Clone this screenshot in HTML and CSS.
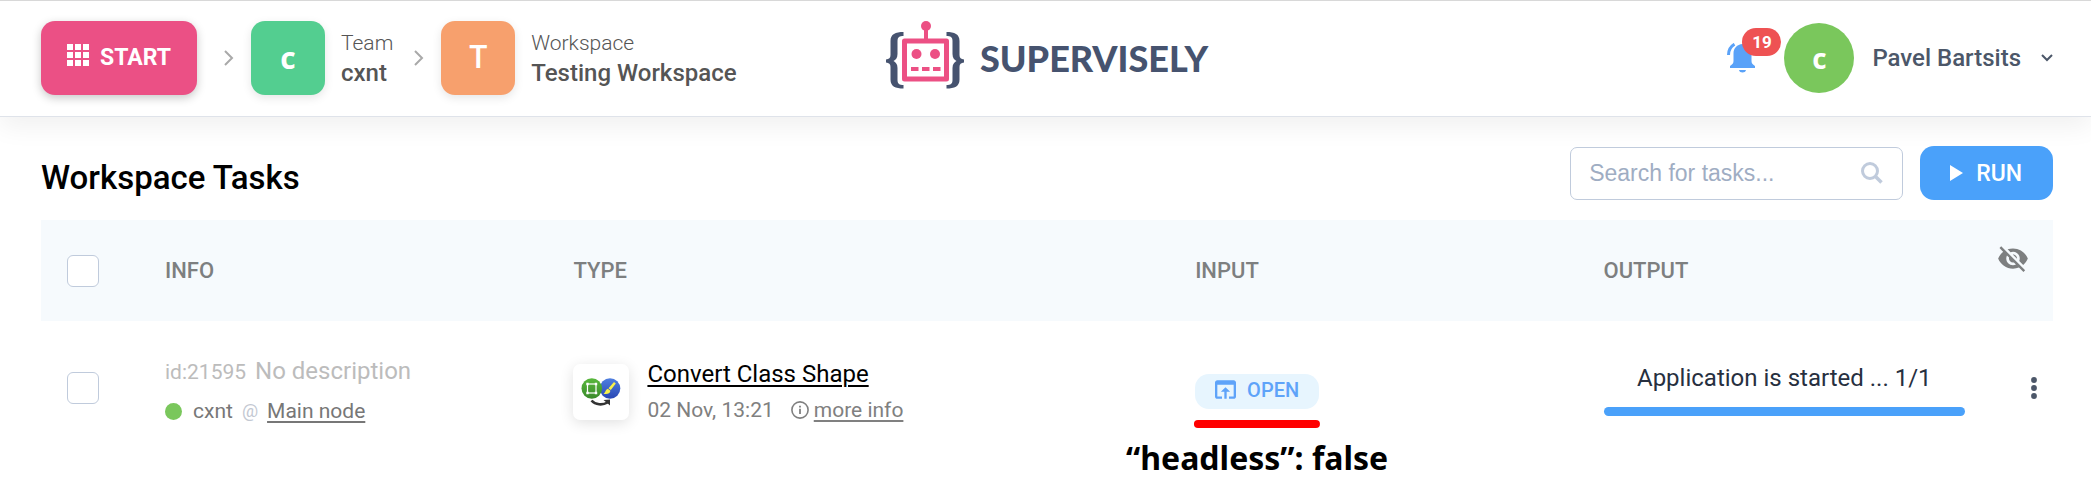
FILE: index.html
```html
<!DOCTYPE html>
<html lang="en">
<head>
<meta charset="utf-8">
<title>Workspace Tasks</title>
<link rel="stylesheet" href="styles.css">
</head>
<body>
<header class="topbar">
  <nav class="crumbs">
    <button class="start" type="button">
      <svg class="start-icon" viewBox="0 0 22 22" aria-hidden="true"><path fill="#fff" d="M0 0h6v6H0zM8 0h6v6H8zM16 0h6v6h-6zM0 8h6v6H0zM8 8h6v6H8zM16 8h6v6h-6zM0 16h6v6H0zM8 16h6v6H8zM16 16h6v6h-6z"/></svg>
      START
    </button>
    <svg class="crumb-arrow" viewBox="0 0 10 16" aria-hidden="true"><path d="M1 1l7 7-7 7" fill="none" stroke="#a9a9a9" stroke-width="2"/></svg>
    <a class="crumb" href="#team">
      <span class="tile tile-team">c</span>
      <span class="crumb-text"><span class="crumb-kind">Team</span><span class="crumb-name">cxnt</span></span>
    </a>
    <svg class="crumb-arrow" viewBox="0 0 10 16" aria-hidden="true"><path d="M1 1l7 7-7 7" fill="none" stroke="#a9a9a9" stroke-width="2"/></svg>
    <a class="crumb" href="#workspace">
      <span class="tile tile-workspace">T</span>
      <span class="crumb-text"><span class="crumb-kind">Workspace</span><span class="crumb-name">Testing Workspace</span></span>
    </a>
  </nav>
  <a class="logo" href="#home">
    <svg class="logo-mark" viewBox="0 0 78 68" aria-hidden="true">
      <path fill="#46536f" d="M17.500 11v4c-4 0-6 1-6 5v13c0 4-2 6-4 7 2 1 4 3 4 7v12c0 4 2 5 6 5v3.500c-8 0-13-2-13-9V46c0-3-1.500-4-4.500-4.500v-3C3 38 4.500 37 4.500 34V20c0-7 5-9 13-9z"/>
      <path fill="#46536f" d="M60.500 11v4c4 0 6 1 6 5v13c0 4 2 6 4 7-2 1-4 3-4 7v12c0 4-2 5-6 5v3.500c8 0 13-2 13-9V46c0-3 1.500-4 4.500-4.500v-3c-3-.5-4.500-1.500-4.500-4.500V20c0-7-5-9-13-9z"/>
      <rect x="18.500" y="20" width="42" height="38" fill="#fff" stroke="#ec5084" stroke-width="5" stroke-linejoin="round"/>
      <circle cx="40" cy="5" r="5" fill="#ec5084"/><path d="M40 5v15" stroke="#ec5084" stroke-width="4"/>
      <circle cx="30.500" cy="33" r="5" fill="#ec5084"/><circle cx="49" cy="33" r="5" fill="#ec5084"/>
      <path d="M25 48h7.500M36 48h7.500M47 48h7.500" stroke="#ec5084" stroke-width="4"/>
    </svg>
    <span class="logo-text">SUPERVISELY</span>
  </a>
  <div class="account">
    <button class="bell" type="button" aria-label="Notifications">
      <svg class="bell-icon" viewBox="0 0 28 30" aria-hidden="true">
        <path fill="#5aa2f8" d="M15.500 1c-5.500.5-9 4-9 9.500V18c0 2-1 3.500-3.500 5v2h25v-2c-2.500-1.500-3.500-3-3.500-5v-7.500c0-5.500-3.500-9-9-9.500zM12 27h7c-.5 1.800-1.800 2.500-3.500 2.500S12.500 28.800 12 27z"/>
        <path d="M1.500 12C1.500 7 3.500 3.500 7.500 1.200" fill="none" stroke="#5aa2f8" stroke-width="3"/>
      </svg>
      <span class="badge">19</span>
    </button>
    <button class="user" type="button">
      <span class="avatar">c</span>
      <span>Pavel Bartsits</span>
      <svg class="user-arrow" viewBox="0 0 12 8" aria-hidden="true"><path d="M1 1l5 5 5-5" fill="none" stroke="#4c5769" stroke-width="2"/></svg>
    </button>
  </div>
</header>

<main class="page">
  <div class="toolbar">
    <h1 class="title">Workspace Tasks</h1>
    <div class="search">
      <input class="search-input" type="text" placeholder="Search for tasks..." aria-label="Search for tasks">
      <svg class="search-icon" viewBox="0 0 22 22" aria-hidden="true"><circle cx="9" cy="9" r="7.500" fill="none" stroke="#c0cbdc" stroke-width="3"/><path d="M14.500 14.500l6 6" stroke="#c0cbdc" stroke-width="3.500"/></svg>
    </div>
    <button class="run" type="button">
      <svg class="run-icon" viewBox="0 0 13 16" aria-hidden="true"><path fill="#fff" d="M0 0l13 8-13 8z"/></svg>
      RUN
    </button>
  </div>

  <table class="tasks">
    <colgroup><col class="col-check"><col class="col-info"><col class="col-type"><col class="col-input"><col class="col-output"><col class="col-menu"></colgroup>
    <thead>
      <tr>
        <th class="cell-check"><input class="check" type="checkbox" aria-label="Select all tasks"></th>
        <th>INFO</th>
        <th>TYPE</th>
        <th>INPUT</th>
        <th>OUTPUT</th>
        <th class="cell-eye">
          <button class="icon-button" type="button" aria-label="Hide finished tasks">
            <svg class="eye-icon" viewBox="1 2 22 20" aria-hidden="true"><path fill="#7d7f80" d="M12 7c2.760 0 5 2.240 5 5 0 .65-.13 1.260-.36 1.830l2.920 2.920c1.510-1.260 2.700-2.890 3.430-4.750-1.730-4.390-6-7.500-11-7.500-1.400 0-2.740.25-3.980.7l2.160 2.160C10.740 7.130 11.350 7 12 7zM2 4.270l2.280 2.280.46.46C3.080 8.300 1.780 10.020 1 12c1.730 4.390 6 7.500 11 7.500 1.550 0 3.030-.3 4.380-.84l.42.42L19.730 22 21 20.730 3.270 3 2 4.270zM7.530 9.800l1.550 1.550c-.05.21-.08.43-.08.65 0 1.660 1.340 3 3 3 .22 0 .44-.03.65-.08l1.550 1.550c-.67.33-1.410.53-2.200.53-2.760 0-5-2.240-5-5 0-.79.2-1.530.53-2.200zm4.310-.78l3.150 3.150.02-.16c0-1.660-1.340-3-3-3l-.17.01z"/></svg>
          </button>
        </th>
      </tr>
    </thead>
    <tbody>
      <tr>
        <td class="cell-check"><input class="check" type="checkbox" aria-label="Select task 21595"></td>
        <td class="cell-info">
          <div class="info-line"><span class="task-id">id:21595</span><span class="task-note">No description</span></div>
          <div class="node-line"><span class="status"></span><span>cxnt</span><span class="at">@</span><a class="link" href="#node">Main node</a></div>
        </td>
        <td class="cell-type">
          <div class="app">
            <span class="app-card">
              <svg class="app-icon" viewBox="0 0 40 28" aria-hidden="true">
                <defs>
                  <linearGradient id="green" x1="0" y1="0" x2="0" y2="1"><stop offset="0" stop-color="#58b83c"/><stop offset="1" stop-color="#3b8a2b"/></linearGradient>
                  <linearGradient id="blue" x1="0" y1="0" x2="0" y2="1"><stop offset="0" stop-color="#5080e0"/><stop offset="1" stop-color="#2846b4"/></linearGradient>
                </defs>
                <circle cx="29" cy="10.500" r="10.300" fill="url(#blue)"/>
                <circle cx="10.800" cy="10.500" r="10.300" fill="url(#green)"/>
                <rect x="6.500" y="6" width="8.500" height="9" fill="none" stroke="#fff" stroke-width="1.200"/>
                <path fill="#fff" d="M5.300 4.800h2.400v2.400H5.300zM13.800 4.800h2.400v2.400h-2.400zM5.300 13.800h2.400v2.400H5.300zM13.800 13.800h2.400v2.400h-2.400z"/>
                <path fill="#f7f04a" d="M33 4l1.800 1.500-5 6.500-2.300-1.800zM26.800 10.800l2.600 2c-.4 3-3 3.500-6.900 3 2-1 1.800-4 4.300-5z"/>
                <path d="M10.500 22.500c4 4.500 11 5 16 2" fill="none" stroke="#333" stroke-width="2.600"/>
                <path fill="#333" d="M22.500 22l6.500-.5v6z"/>
              </svg>
            </span>
            <div>
              <a class="app-name" href="#app">Convert Class Shape</a>
              <div class="app-meta">
                <span>02 Nov, 13:21</span>
                <span class="more">
                  <svg class="more-icon" viewBox="0 0 18 18" aria-hidden="true"><circle cx="9" cy="9" r="8.100" fill="none" stroke="#808080" stroke-width="1.600"/><path d="M9 7.800V13M9 4.700v1.800" stroke="#808080" stroke-width="1.800"/></svg>
                  <a class="link" href="#more">more info</a>
                </span>
              </div>
            </div>
          </div>
        </td>
        <td>
          <div class="open-wrap">
            <button class="open" type="button">
              <svg class="open-icon" viewBox="3 4 18 16" aria-hidden="true"><path fill="#5ea3f9" d="M19 4H5c-1.110 0-2 .9-2 2v12c0 1.100.89 2 2 2h4v-2H5V8h14v10h-4v2h4c1.100 0 2-.9 2-2V6c0-1.100-.89-2-2-2zm-7 6l-4 4h3v6h2v-6h3l-4-4z"/></svg>
              OPEN
            </button>
            <div class="note"><span class="note-line"></span><span class="note-text">“headless”: false</span></div>
          </div>
        </td>
        <td class="cell-output">
          <div class="progress-text">Application is started ... 1/1</div>
          <div class="progress"></div>
        </td>
        <td class="cell-menu">
          <button class="icon-button" type="button" aria-label="Task menu">
            <svg class="dots-icon" viewBox="0 0 6 22" aria-hidden="true"><circle cx="3" cy="3" r="2.900" fill="#4c5769"/><circle cx="3" cy="11" r="2.900" fill="#4c5769"/><circle cx="3" cy="19" r="2.900" fill="#4c5769"/></svg>
          </button>
        </td>
      </tr>
    </tbody>
  </table>
</main>
</body>
</html>
```

FILE: styles.css
```css
* { box-sizing: border-box; }

body {
  min-height: 100vh;
  margin: 0;
  background: #fff;
  color: #000;
  font-family: Roboto, "Liberation Sans", sans-serif;
  font-size: 21px;
}

button {
  margin: 0;
  padding: 0;
  border: 0;
  background: none;
  color: inherit;
  font: inherit;
  cursor: pointer;
}

a { color: inherit; text-decoration: none; }
svg { display: block; flex: none; }

/* Top bar */
.topbar {
  display: grid;
  grid-template-columns: 1fr auto 1fr;
  align-items: center;
  height: 117px;
  padding: 0 38px 2px 41px;
  border-top: 1px solid #d8d8d8;
  border-bottom: 1px solid #dfe3ea;
  box-shadow: 0 10px 24px rgba(0, 0, 0, 0.06);
}

.crumbs { display: flex; align-items: center; }

.start {
  display: flex;
  align-items: center;
  gap: 11px;
  height: 74px;
  padding: 0 26px;
  border-radius: 14px;
  background: #eb5085;
  box-shadow: 0 3px 10px rgba(0, 0, 0, 0.22);
  color: #fff;
  font-size: 23px;
  font-weight: 700;
}

.start-icon { width: 22px; height: 22px; margin-bottom: 6px; }
.crumb-arrow { width: 10px; height: 16px; margin: 0 17px 0 27px; }
.crumb { display: flex; align-items: center; gap: 16px; }
.crumb + .crumb-arrow { margin-left: 21px; }

.tile {
  display: grid;
  place-items: center;
  width: 74px;
  height: 74px;
  border-radius: 14px;
  box-shadow: 0 3px 10px rgba(0, 0, 0, 0.1);
  color: #fff;
  font-family: "Open Sans", sans-serif;
  font-size: 30px;
  font-weight: 700;
}

.tile-team { background: #53ce90; }
.tile-workspace { padding-bottom: 4px; background: #f7a06d; font-size: 32px; font-weight: 600; }
.crumb-text { display: flex; flex-direction: column; color: #555; }
.crumb-kind { font-size: 21px; font-weight: 300; line-height: 30px; }
.crumb-name { font-size: 24px; font-weight: 500; line-height: 30px; }

.logo { display: flex; align-items: center; gap: 16px; }
.logo-mark { width: 78px; height: 68px; margin-bottom: 6px; }
.logo-text {
  color: #46536f;
  font-family: Lato, sans-serif;
  font-size: 36px;
  font-weight: 900;
}

.account { display: flex; justify-content: flex-end; align-items: center; }
.bell { position: relative; width: 57px; height: 30px; }
.bell-icon { width: 28px; height: 30px; }
.badge {
  position: absolute;
  top: -15px;
  right: 3px;
  width: 39px;
  border-radius: 14px;
  background: #ee5253;
  color: #fff;
  font-size: 17px;
  font-weight: 700;
  line-height: 28px;
}

.user {
  display: flex;
  align-items: center;
  color: #4c5769;
  font-size: 24px;
  font-weight: 500;
}

.avatar {
  display: grid;
  place-items: center;
  width: 70px;
  height: 70px;
  margin-right: 18px;
  border-radius: 50%;
  background: #7ac75c;
  color: #fff;
  font-family: "Open Sans", sans-serif;
  font-size: 28px;
  font-weight: 700;
}

.user-arrow { width: 12px; height: 8px; margin-left: 20px; }

/* Page */
.page { padding: 29px 38px 0 41px; }

.toolbar { display: flex; align-items: center; gap: 17px; margin-bottom: 20px; }
.title { flex: 1; margin: 10px 0 0; font-size: 33px; font-weight: 500; line-height: 40px; }

.search { display: flex; position: relative; width: 333px; }
.search-input {
  width: 100%;
  height: 53px;
  padding: 0 56px 0 18px;
  border: 1px solid #c0cbdc;
  border-radius: 7px;
  font-family: "Liberation Sans", sans-serif;
  font-size: 23px;
}
.search-input::placeholder { color: #9fadc3; }
.search-icon { position: absolute; top: 15px; right: 20px; width: 22px; height: 22px; }

.run {
  display: flex;
  align-items: center;
  gap: 13px;
  height: 54px;
  padding: 0 31px 0 30px;
  border-radius: 14px;
  background: #4aa1fa;
  color: #fff;
  font-size: 23px;
  font-weight: 500;
}
.run-icon { width: 13px; height: 16px; }

/* Tasks table */
.tasks { width: 100%; border-collapse: collapse; table-layout: fixed; }
.col-check { width: 124px; }
.col-info { width: 20.3%; }
.col-type { width: 30.9%; }
.col-input { width: 20.3%; }
.col-menu { width: 88px; }

.tasks th, .tasks td { padding: 0; text-align: left; vertical-align: middle; }
.tasks th { height: 101px; background: #f6fafd; color: #7d7f80; font-size: 22px; font-weight: 500; }
.tasks td { height: 134px; color: #777; }
.tasks .cell-check { padding-left: 26px; }
.tasks .cell-eye { padding: 0 25px 24px 0; }
.tasks .cell-menu { padding-right: 8px; }
.tasks .cell-output { color: #27303f; }
.tasks .cell-info { padding-top: 8px; }
.tasks .cell-type { padding-top: 8px; }

.check {
  display: block;
  width: 32px;
  height: 32px;
  margin: 0;
  border: 1px solid #c0cbdc;
  border-radius: 6px;
  background: #fff;
  appearance: none;
}

.info-line { display: flex; align-items: baseline; gap: 9px; margin-bottom: 1px; color: #bcbcbc; line-height: 36px; }
.task-note { font-size: 24px; }
.node-line { display: flex; align-items: center; line-height: 40px; }
.status { width: 17px; height: 17px; margin-right: 11px; border-radius: 50%; background: #7ac75c; }
.at { margin: 0 9px; color: #c3c8d2; font-size: 18px; }

.link, .app-name { text-decoration: underline; text-decoration-thickness: 2px; text-underline-offset: 3px; }

.app { display: flex; align-items: center; gap: 18px; }
.app-card {
  display: grid;
  place-items: center;
  width: 56px;
  height: 56px;
  border-radius: 7px;
  background: #fff;
  box-shadow: 0 3px 14px rgba(0, 0, 0, 0.12);
}
.app-icon { width: 40px; height: 28px; }
.app-name { color: #000; font-size: 24px; line-height: 36px; }
.app-meta { display: flex; gap: 17px; color: #808080; line-height: 36px; }
.more { display: flex; align-items: center; gap: 5px; }
.more-icon { width: 18px; height: 18px; }

.open-wrap { position: relative; width: 124px; padding-top: 7px; }
.open {
  display: flex;
  justify-content: center;
  gap: 11px;
  align-items: center;
  width: 100%;
  height: 35px;
  padding-bottom: 4px;
  border-radius: 14px;
  background: #e7f5fe;
  color: #5ea3f9;
  font-size: 20px;
  font-weight: 500;
}
.open-icon { width: 21px; height: 19px; }

.note {
  position: absolute;
  top: 53px;
  left: 50%;
  display: flex;
  flex-direction: column;
  align-items: center;
  transform: translateX(-50%);
}
.note-line { width: 126px; height: 8px; border-radius: 4px; background: #f00; }
.note-text {
  margin-top: 10px;
  color: #000;
  font-family: "Noto Sans", sans-serif;
  font-size: 32px;
  font-weight: 700;
  line-height: 40px;
  white-space: nowrap;
}

.progress-text { font-size: 24px; line-height: 36px; text-align: center; white-space: nowrap; }
.progress { height: 9px; margin-top: 11px; border-radius: 5px; background: #4aa1fa; }

.icon-button { display: block; margin-left: auto; padding: 0 8px; }
.cell-eye .icon-button { padding: 0; }
.eye-icon { width: 30px; height: 27px; }
.dots-icon { width: 6px; height: 22px; }
```
